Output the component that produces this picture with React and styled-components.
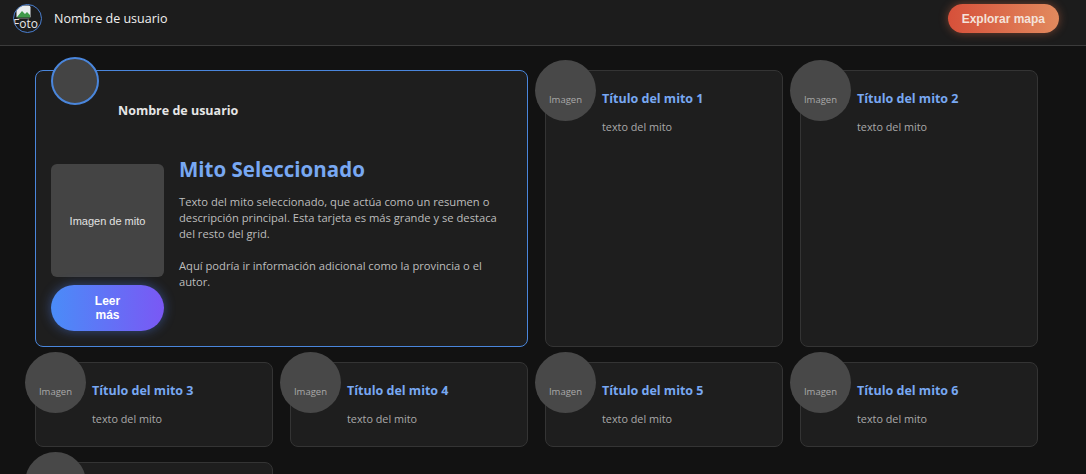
import React from "react";
import styled, { createGlobalStyle } from "styled-components";

const Global = createGlobalStyle`
  html { background: #121212; overflow-y: scroll; }
  html::-webkit-scrollbar { width: 3px; }
  html::-webkit-scrollbar-track { background: #262631; }
  html::-webkit-scrollbar-thumb { background: #262631; }
  body {
    margin: 0;
    background: #121212;
    color: #e8e8e8;
    font-family: "Open Sans", "Noto Sans", sans-serif;
  }
  * { box-sizing: border-box; }
`;

const Header = styled.header`
  height: 46px;
  background: #1c1c1c;
  border-bottom: 1px solid #3b3b3b;
  display: flex;
  align-items: center;
  justify-content: space-between;
  padding: 0 27px 8px 13px;
`;

const UserBox = styled.div`
  display: flex;
  align-items: center;
  gap: 12px;
`;

const HeaderAvatar = styled.div`
  width: 29px;
  height: 29px;
  border-radius: 50%;
  border: 1.5px solid #4a7fd0;
  overflow: hidden;
  display: flex;
  flex-direction: column;
  align-items: flex-start;
  padding-left: 2px;
  background: #1c1c1c;
`;

const AltText = styled.span`
  font-family: "Open Sans", sans-serif;
  font-size: 12px;
  line-height: 12px;
  color: #e8e8e8;
  margin-left: -3px;
  margin-top: -1px;
`;

const HeaderName = styled.span`
  font-size: 12.5px;
  color: #f0f0f0;
`;

const MapButton = styled.button`
  height: 29px;
  padding: 0 14px;
  border: none;
  border-radius: 15px;
  background: linear-gradient(90deg, #d6503a 0%, #e28a5e 100%);
  box-shadow: 0 0 10px rgba(226, 110, 70, 0.45);
  color: #f4e2da;
  font-family: "Liberation Sans", Arial, sans-serif;
  font-weight: bold;
  font-size: 12px;
`;

const Grid = styled.main`
  display: grid;
  grid-template-columns: repeat(4, 238px);
  column-gap: 17px;
  row-gap: 15px;
  padding: 24px 0 40px 35px;
`;

const Featured = styled.section`
  grid-column: span 2;
  position: relative;
  background: #1e1e1e;
  border: 1px solid #4a86dc;
  border-radius: 8px;
  padding: 15px 15px 15px 15px;
`;

const FeaturedAvatar = styled.div`
  position: absolute;
  top: -14px;
  left: 15px;
  width: 48px;
  height: 48px;
  border-radius: 50%;
  background: #444;
  border: 2px solid #4a86dc;
`;

const FeaturedUser = styled.div`
  padding: 16px 0 0 67px;
  font-size: 12.5px;
  line-height: 18px;
  font-weight: 700;
  color: #e6e6e6;
`;

const FeaturedBody = styled.div`
  display: flex;
  align-items: flex-start;
  gap: 15px;
  margin-top: 44px;
`;

const MediaCol = styled.div`
  width: 113px;
  flex-shrink: 0;
  display: flex;
  flex-direction: column;
  gap: 8px;
`;

const MythImage = styled.div`
  width: 113px;
  height: 113px;
  border-radius: 6px;
  background: #444;
  display: flex;
  align-items: center;
  justify-content: center;
  font-family: "Liberation Sans", Arial, sans-serif;
  font-size: 11px;
  color: #e2e2e2;
`;

const ReadButton = styled.button`
  height: 46px;
  border: none;
  border-radius: 23px;
  padding: 0 32px;
  background: linear-gradient(90deg, #4a8cf8 0%, #7a58f4 100%);
  box-shadow: 0 0 12px rgba(80, 130, 250, 0.45);
  color: #fff;
  font-family: "Liberation Sans", Arial, sans-serif;
  font-weight: bold;
  font-size: 12px;
  line-height: 14px;
`;

const TextCol = styled.div`
  flex: 1;
`;

const FeaturedTitle = styled.h2`
  margin: -7px 0 12px;
  font-size: 20.5px;
  line-height: 25px;
  font-weight: 700;
  color: #78a8f2;
`;

const Para = styled.p`
  margin: 0 0 16px;
  font-size: 11.2px;
  line-height: 16px;
  color: #bdbdbd;
`;

const Card = styled.article`
  position: relative;
  background: #1e1e1e;
  border: 1px solid #343434;
  border-radius: 8px;
  padding: 19px 16px 20px 56px;
`;

const Thumb = styled.div`
  position: absolute;
  top: -11px;
  left: -11px;
  width: 61px;
  height: 61px;
  border-radius: 50%;
  background: #484848;
  display: flex;
  align-items: center;
  justify-content: center;
  padding-top: 18px;
  font-family: "Open Sans", sans-serif;
  font-size: 9.5px;
  color: #a8a8a8;
`;

const CardTitle = styled.h3`
  margin: 0;
  font-size: 12.5px;
  line-height: 18px;
  font-weight: 700;
  color: #78a8f2;
`;

const CardText = styled.p`
  margin: 11px 0 0;
  font-size: 10.8px;
  line-height: 15px;
  color: #a9a9a9;
`;

const BrokenImg = () => (
  <svg width="15" height="14" viewBox="0 0 15 14">
    <rect x="0.5" y="0.5" width="14" height="13" rx="2" fill="#e9eef0" />
    <path d="M1 12 L6 6 L9 9 L11 7 L14 10 L14 13 L1 13 Z" fill="#3f9a4a" />
    <path d="M1 13 L14 13" stroke="#2a2a2a" strokeWidth="1" />
  </svg>
);

const myths = [1, 2, 3, 4, 5, 6, 7];

export default function App() {
  return (
    <>
      <Global />
      <Header>
        <UserBox>
          <HeaderAvatar>
            <BrokenImg />
            <AltText>Foto</AltText>
          </HeaderAvatar>
          <HeaderName>Nombre de usuario</HeaderName>
        </UserBox>
        <MapButton>Explorar mapa</MapButton>
      </Header>
      <Grid>
        <Featured>
          <FeaturedAvatar />
          <FeaturedUser>Nombre de usuario</FeaturedUser>
          <FeaturedBody>
            <MediaCol>
              <MythImage>Imagen de mito</MythImage>
              <ReadButton>Leer más</ReadButton>
            </MediaCol>
            <TextCol>
              <FeaturedTitle>Mito Seleccionado</FeaturedTitle>
              <Para>
                Texto del mito seleccionado, que actúa como un resumen o
                descripción principal. Esta tarjeta es más grande y se destaca
                del resto del grid.
              </Para>
              <Para>
                Aquí podría ir información adicional como la provincia o el
                autor.
              </Para>
            </TextCol>
          </FeaturedBody>
        </Featured>
        {myths.map((n) => (
          <Card key={n}>
            <Thumb>Imagen</Thumb>
            <CardTitle>Título del mito {n}</CardTitle>
            <CardText>texto del mito</CardText>
          </Card>
        ))}
      </Grid>
    </>
  );
}
